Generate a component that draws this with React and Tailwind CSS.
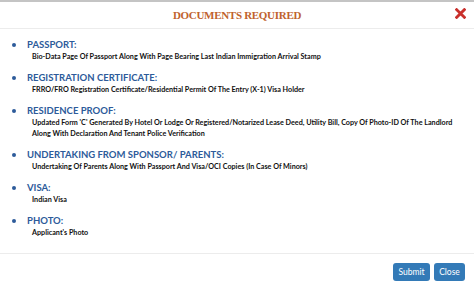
const sections = [
  { title: 'PASSPORT:', lines: ['Bio-Data Page Of Passport Along With Page Bearing Last Indian Immigration Arrival Stamp'] },
  { title: 'REGISTRATION CERTIFICATE:', lines: ['FRRO/FRO Registration Certificate/Residential Permit Of The Entry (X-1) Visa Holder'] },
  {
    title: 'RESIDENCE PROOF:',
    lines: [
      "Updated Form 'C' Generated By Hotel Or Lodge Or Registered/Notarized Lease Deed, Utility Bill, Copy Of Photo-ID Of The Landlord",
      'Along With Declaration And Tenant Police Verification',
    ],
  },
  { title: 'UNDERTAKING FROM SPONSOR/ PARENTS:', lines: ['Undertaking Of Parents Along With Passport And Visa/OCI Copies (In Case Of Minors)'] },
  { title: 'VISA:', lines: ['Indian Visa'] },
  { title: 'PHOTO:', lines: ["Applicant's Photo"] },
]

export default function App() {
  return (
    <div className="w-[474px] h-[289px] bg-white overflow-hidden border-t-2 border-[#c4c4c4]" style={{ fontFamily: 'Lato, "Open Sans", sans-serif' }}>
      {/* header */}
      <div className="h-[27px] flex items-center justify-center relative border-b border-[#ececec]">
        <h2 className="text-[11px] font-bold text-[#c0622d] tracking-[-0.3px]" style={{ fontFamily: '"Liberation Serif", serif' }}>
          DOCUMENTS REQUIRED
        </h2>
        <button className="absolute right-[8px] top-[6px] text-[#c9302c]">
          <svg width="11" height="11" viewBox="0 0 10 10">
            <path d="M1.5 1.5 L8.5 8.5 M8.5 1.5 L1.5 8.5" stroke="currentColor" strokeWidth="2.6" strokeLinecap="square" />
          </svg>
        </button>
      </div>

      {/* body */}
      <ul className="h-[224px] pt-[9px] pl-[11px] flex flex-col gap-[9px]">
        {sections.map((s) => (
          <li key={s.title} className="flex">
            <span className="w-[16px] pt-[5px] flex justify-start pl-[1px]">
              <span className="w-[4px] h-[4px] rounded-full bg-[#2d5b9a]" />
            </span>
            <div>
              <div className="text-[9.5px] leading-[13px] font-bold text-[#2d5b9a]">{s.title}</div>
              <div className="pl-[5px]">
                {s.lines.map((l) => (
                  <div key={l} className="text-[7.2px] leading-[11px] font-bold text-[#111] whitespace-nowrap">{l}</div>
                ))}
              </div>
            </div>
          </li>
        ))}
      </ul>

      {/* footer */}
      <div className="border-t border-[#ececec] flex justify-end gap-[4px] pr-[9px] pt-[9px]">
        <button className="h-[18px] w-[37px] rounded-[3px] bg-[#337ab7] text-white text-[8.5px]">Submit</button>
        <button className="h-[18px] w-[31px] rounded-[3px] bg-[#337ab7] text-white text-[8.5px]">Close</button>
      </div>
    </div>
  )
}
